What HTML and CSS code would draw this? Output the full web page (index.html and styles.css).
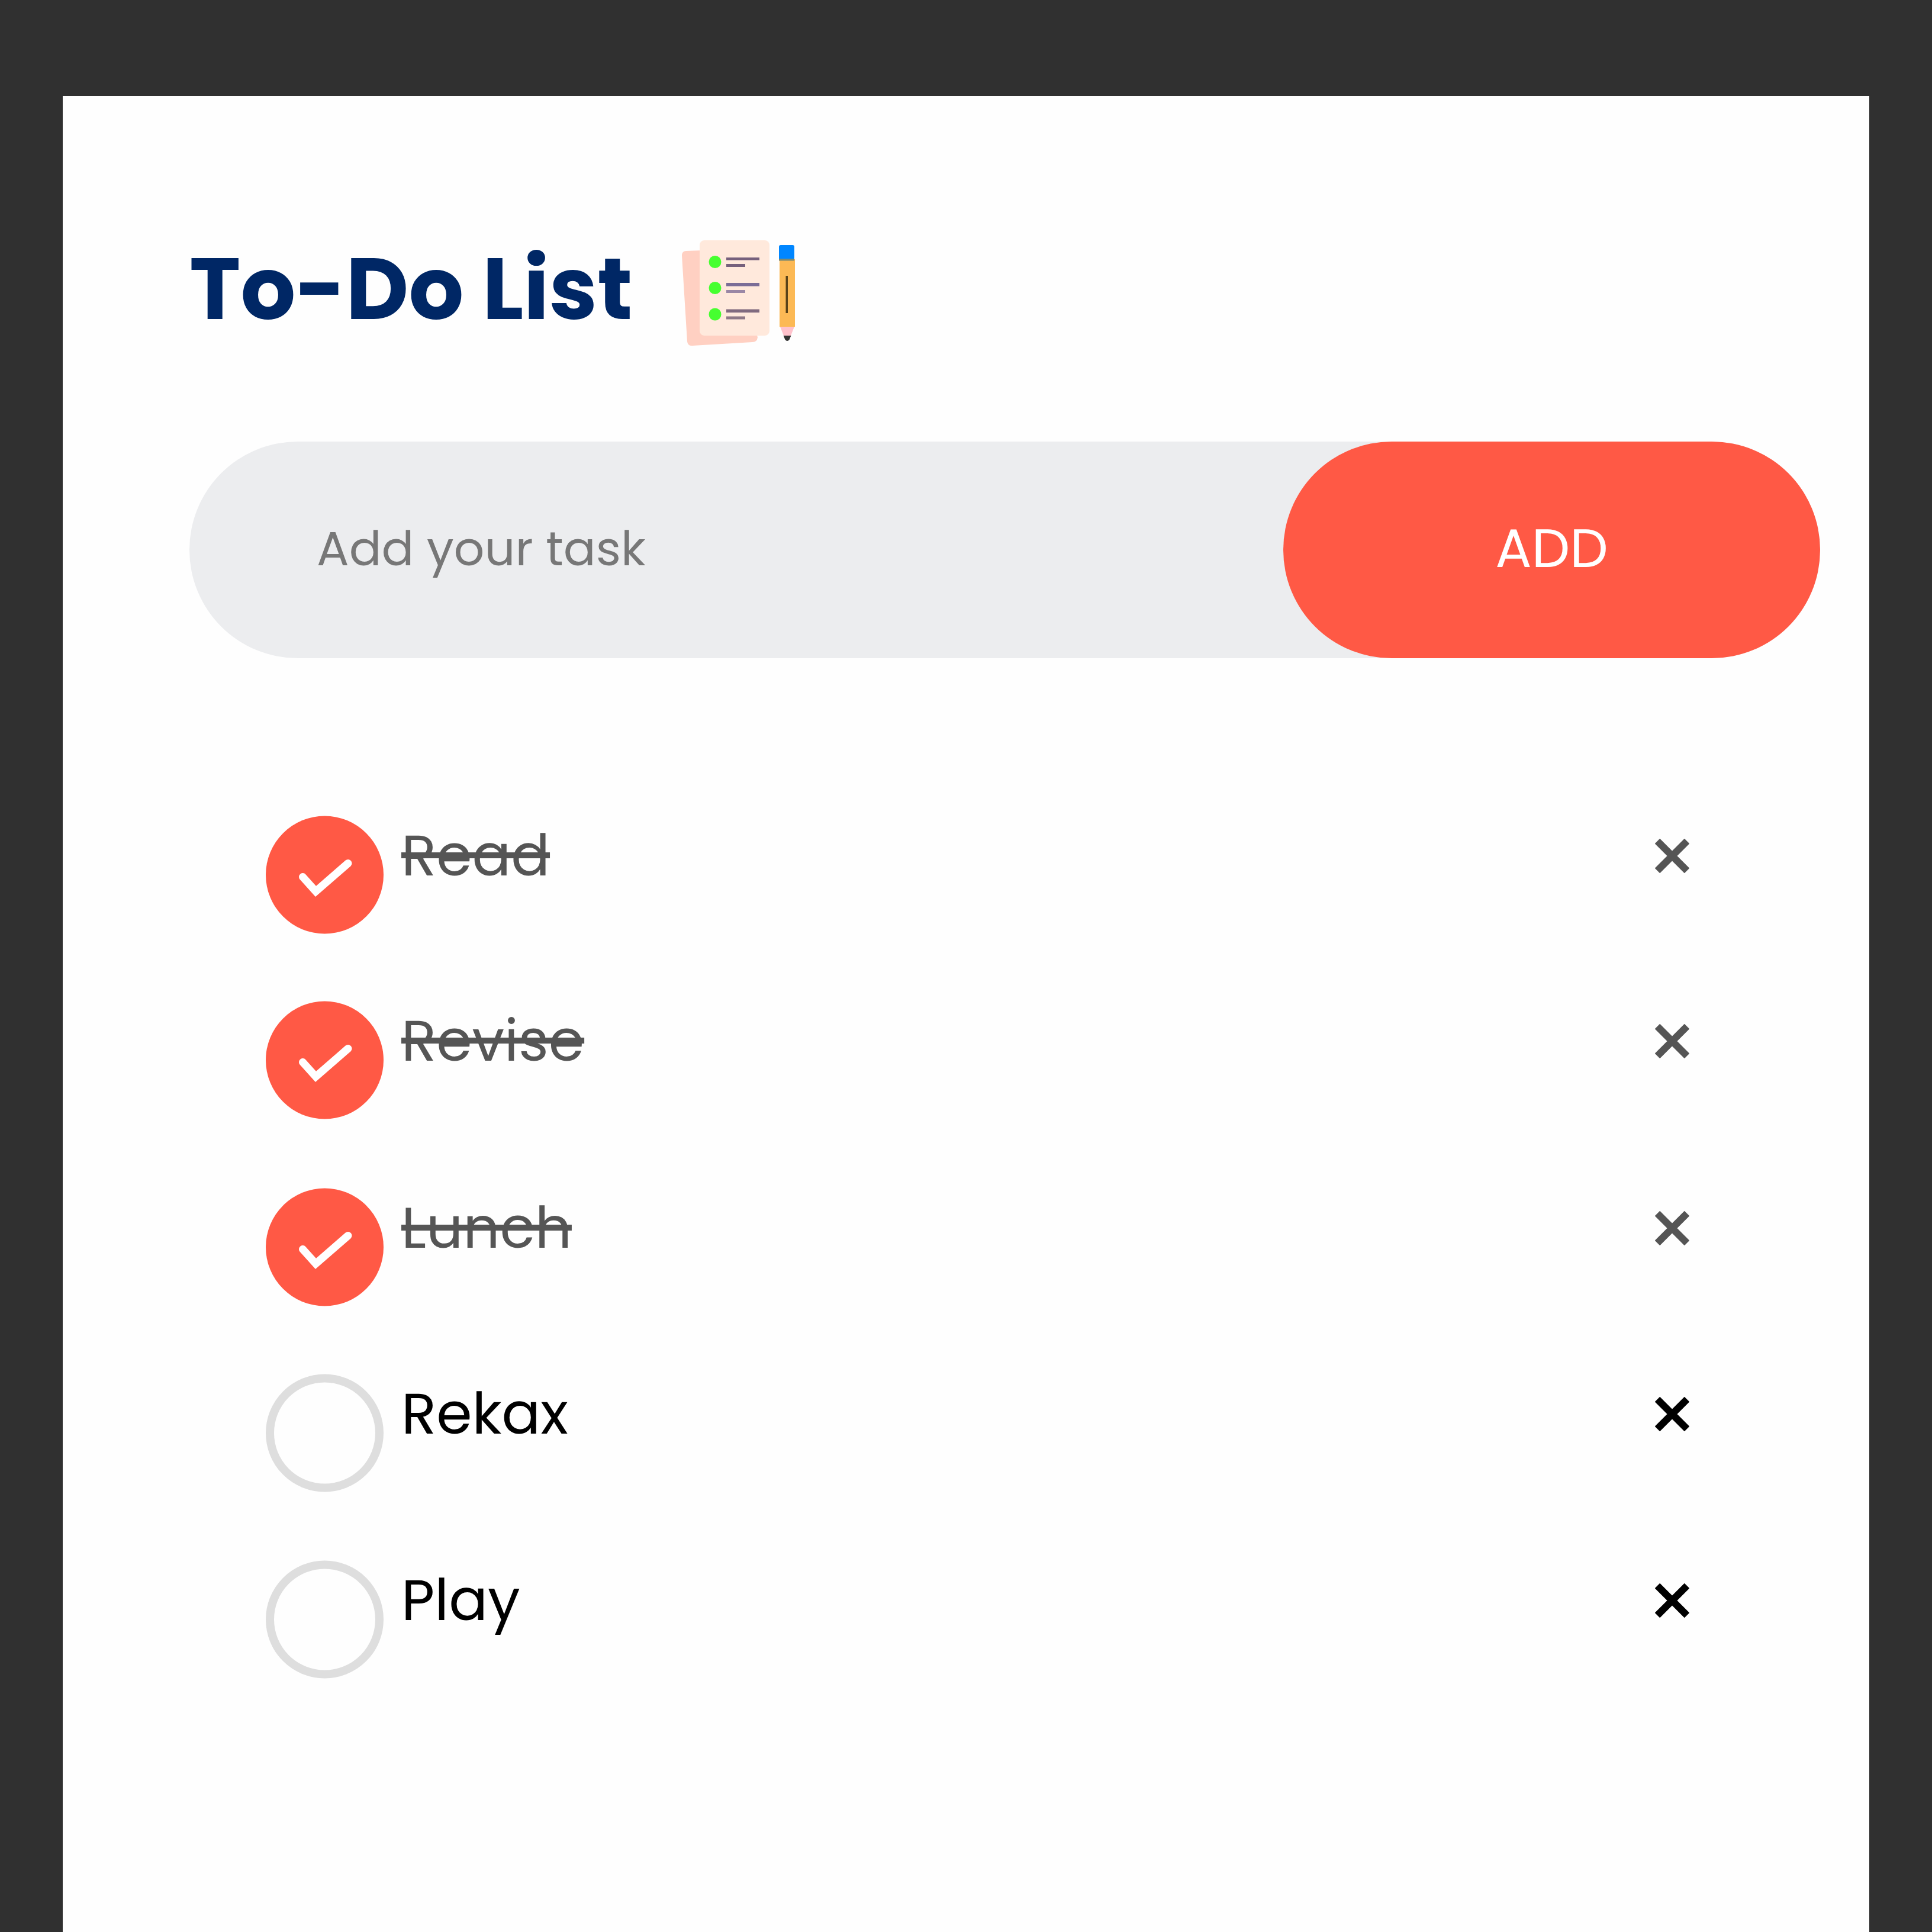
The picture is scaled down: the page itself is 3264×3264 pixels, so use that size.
FILE: index.html
```html
<!DOCTYPE html>
<html lang="en">
<head>
<meta charset="utf-8">
<title>To-Do List</title>
<link rel="stylesheet" href="styles.css">
</head>
<body>
<main class="card">
  <header class="header">
    <h1 class="title">To-Do List</h1>
    <svg class="notes" viewBox="0 0 260 230" aria-hidden="true">
      <path fill="#ffd0c2" d="M39 44 L120 41 L160 190 Q159 198 151 198 L50 204 Q42 205 41 197 L32 52 Q32 44 39 44Z"/>
      <rect x="62" y="26" width="118" height="161" rx="8" fill="#ffe9dc"/>
      <g fill="#46ff30"><circle cx="88" cy="62.500" r="10.500"/><circle cx="88" cy="106.500" r="10.500"/><circle cx="88" cy="151" r="10.500"/></g>
      <g fill="#76607c">
        <rect x="107" y="55" width="56" height="4.500"/><rect x="107" y="66" width="32" height="5"/>
        <rect x="107" y="98" width="56" height="5.500" fill="#7b6d97"/><rect x="107" y="110" width="32" height="5" fill="#9a87a5"/>
        <rect x="107" y="142.500" width="56" height="5.500" fill="#806a7f"/><rect x="107" y="154.500" width="32" height="5" fill="#8e7886"/>
      </g>
      <path fill="#fcb955" d="M197 58H223V172H197Z"/>
      <path fill="#0086ff" d="M196 59V37Q196 34 199 34H219Q222 34 222 37V59Z"/>
      <path fill="#7d8a70" d="M196 57H222V60.500H196Z"/>
      <path fill="#ffc2cc" d="M198 172H222L216 187H204Z"/>
      <path fill="#333" d="M203.500 187H216.500L213.500 194Q210 198 206.500 194Z"/>
      <path fill="#5a4218" d="M207.500 86H211V149H207.500Z"/>
    </svg>
  </header>
  <form class="entry">
    <span class="placeholder">Add your task</span>
    <button class="add" type="button">ADD</button>
  </form>
  <ul class="list">
    <li class="task done"><svg class="mark" viewBox="0 0 200 200"><circle class="disc" cx="99.500" cy="100" r="99.500"/><path class="tick" d="M62.500 103.500 L84.500 128 L139 80.500"/></svg><span class="label">Read</span><svg class="remove" viewBox="0 0 58 58"><path d="M4 4L54 54M54 4L4 54"/></svg></li>
    <li class="task done"><svg class="mark" viewBox="0 0 200 200"><circle class="disc" cx="99.500" cy="100" r="99.500"/><path class="tick" d="M62.500 103.500 L84.500 128 L139 80.500"/></svg><span class="label">Revise</span><svg class="remove" viewBox="0 0 58 58"><path d="M4 4L54 54M54 4L4 54"/></svg></li>
    <li class="task done"><svg class="mark" viewBox="0 0 200 200"><circle class="disc" cx="99.500" cy="100" r="99.500"/><path class="tick" d="M62.500 103.500 L84.500 128 L139 80.500"/></svg><span class="label">Lunch</span><svg class="remove" viewBox="0 0 58 58"><path d="M4 4L54 54M54 4L4 54"/></svg></li>
    <li class="task"><svg class="mark" viewBox="0 0 200 200"><circle class="ring" cx="99.500" cy="100" r="92.500"/></svg><span class="label">Rekax</span><svg class="remove" viewBox="0 0 58 58"><path d="M4 4L54 54M54 4L4 54"/></svg></li>
    <li class="task"><svg class="mark" viewBox="0 0 200 200"><circle class="ring" cx="99.500" cy="100" r="92.500"/></svg><span class="label">Play</span><svg class="remove" viewBox="0 0 58 58"><path d="M4 4L54 54M54 4L4 54"/></svg></li>
  </ul>
</main>
</body>
</html>
```
FILE: styles.css
```css
* { box-sizing: border-box; margin: 0; padding: 0; }
html, body { height: 3264px; }
body {
  padding: 162px 106px 0;
  background: #303030;
  font-family: Poppins, Inter, sans-serif;
  overflow: hidden;
}
.card { height: 3102px; padding: 218px 0 0 214px; background: #fefefe; }
.header { display: flex; align-items: center; height: 230px; }
.title {
  width: 800px;
  margin-bottom: 14px;
  color: #002765;
  font-size: 146.2px;
  font-weight: 700;
  line-height: 150px;
  white-space: nowrap;
}
.notes { width: 260px; height: 230px; }
.entry {
  display: flex;
  align-items: center;
  justify-content: space-between;
  width: 2755px;
  height: 366px;
  margin-top: 136px;
  padding-left: 215px;
  border-radius: 183px;
  background: #ecedef;
}
.placeholder { margin-bottom: 5px; color: #777; font-size: 81.1px; line-height: 100px; white-space: nowrap; }
.add {
  width: 907px;
  height: 366px;
  padding-bottom: 5px;
  border: 0;
  border-radius: 183px;
  background: #ff5945;
  color: #fff;
  font: inherit;
  font-size: 91.2px;
}
.list {
  display: grid;
  grid-template-rows: 313px 316px 314px 315px 314px;
  width: 2405px;
  margin: 266px 0 0 129px;
  list-style: none;
}
.task { display: flex; align-items: flex-start; color: #000; }
.task.done { color: #555; }
.mark { width: 200px; height: 200px; }
.disc { fill: #ff5945; }
.tick { fill: none; stroke: #fff; stroke-width: 13; stroke-linecap: round; }
.ring { fill: none; stroke: #dedede; stroke-width: 14; }
.label { margin: 17px 0 0 29px; font-size: 97.3px; line-height: 100px; white-space: nowrap; }
.done .label { text-decoration: line-through; text-decoration-thickness: 10px; }
.remove { width: 58px; height: 58px; margin: 39px 0 0 auto; }
.remove path { fill: none; stroke: currentColor; stroke-width: 12; }
```
